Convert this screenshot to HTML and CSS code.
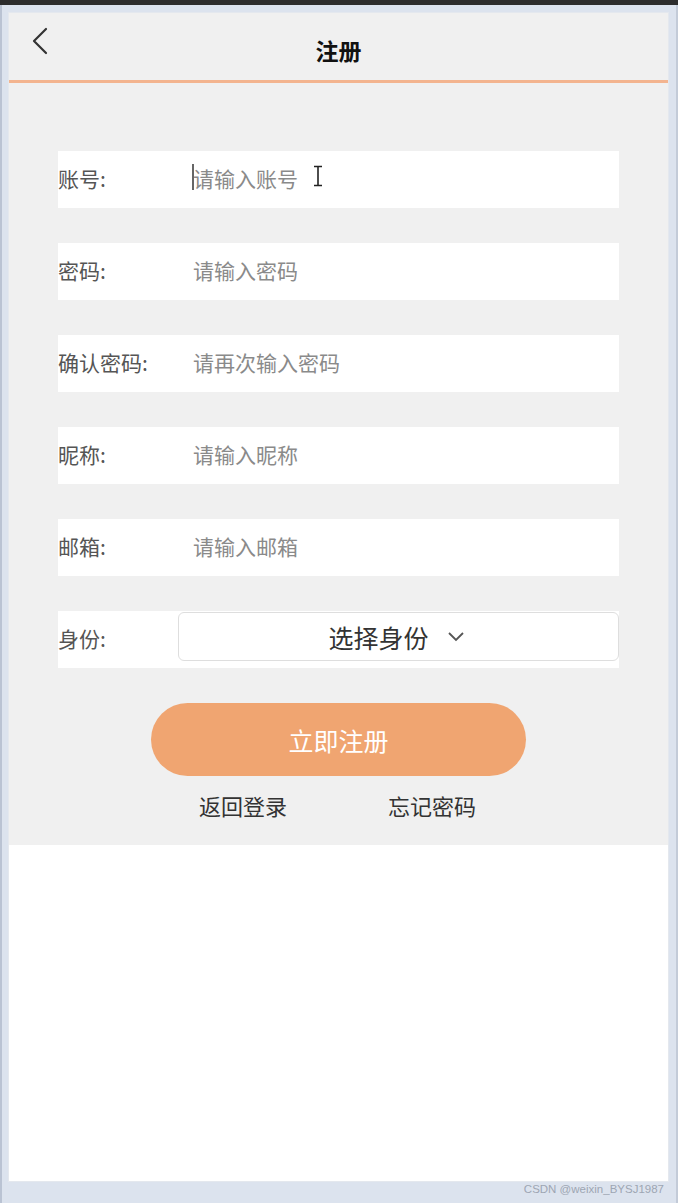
FILE: index.html
```html
<!DOCTYPE html>
<html lang="zh-CN">
<head>
<meta charset="utf-8">
<title>注册</title>
<link rel="stylesheet" href="styles.css">
</head>
<body>
<div class="topbar"></div>
<div class="frame">
  <div class="phone">
    <header class="app-header">
      <span class="back">
        <svg width="18" height="30" viewBox="0 0 18 30"><path d="M15 2 L3 14 L15 26" fill="none" stroke="#333" stroke-width="2.2" stroke-linecap="round" stroke-linejoin="round"/></svg>
      </span>
      <h1 class="title">注册</h1>
    </header>
    <main class="content">
      <div class="form">
        <div class="row">
          <span class="label">账号:</span>
          <span class="input"><span class="caret"></span>请输入账号</span>
          <svg class="ibeam" width="10" height="22" viewBox="0 0 10 22"><path d="M1 1.5 H9 M5 1.5 V20.5 M1 20.5 H9" fill="none" stroke="#222" stroke-width="1.6"/></svg>
        </div>
        <div class="row">
          <span class="label">密码:</span>
          <span class="input">请输入密码</span>
        </div>
        <div class="row">
          <span class="label">确认密码:</span>
          <span class="input">请再次输入密码</span>
        </div>
        <div class="row">
          <span class="label">昵称:</span>
          <span class="input">请输入昵称</span>
        </div>
        <div class="row">
          <span class="label">邮箱:</span>
          <span class="input">请输入邮箱</span>
        </div>
        <div class="row">
          <span class="label">身份:</span>
          <div class="select">
            <span>选择身份</span>
            <svg width="18" height="12" viewBox="0 0 18 12"><path d="M2 2 L9 9 L16 2" fill="none" stroke="#555" stroke-width="1.8"/></svg>
          </div>
        </div>
      </div>
      <button class="submit">立即注册</button>
      <div class="links">
        <span>返回登录</span>
        <span>忘记密码</span>
      </div>
    </main>
  </div>
  <div class="watermark">CSDN @weixin_BYSJ1987</div>
</div>
</body>
</html>
```
FILE: styles.css
```css
* { box-sizing: border-box; }
html, body { margin: 0; padding: 0; }
body {
  width: 678px;
  height: 1203px;
  overflow: hidden;
  background: #dce3ee;
  font-family: "Noto Sans CJK SC", "Microsoft YaHei", sans-serif;
}
.topbar {
  height: 5px;
  background: #2d2d2d;
}
.frame {
  height: 1198px;
  padding: 8px 8px 0 7px;
  border-left: 2px solid #bac3d3;
  border-right: 2px solid #c3cbd8;
  display: flex;
  flex-direction: column;
}
.phone {
  width: 659px;
  height: 1168px;
  background: #ffffff;
  display: flex;
  flex-direction: column;
  box-shadow: 0 0 0 1px #e4e8ee;
}
.app-header {
  height: 70px;
  background: #f0f0f0;
  border-bottom: 3px solid #f3b48f;
  position: relative;
  display: flex;
  align-items: center;
  justify-content: center;
}
.back {
  position: absolute;
  left: 22px;
  top: 14px;
  display: block;
}
.title {
  margin: 6px 0 0;
  font-size: 23px;
  font-weight: 700;
  color: #111;
  line-height: 30px;
}
.content {
  background: #f0f0f0;
  padding: 68px 49px 0;
  height: 762px;
  display: flex;
  flex-direction: column;
  align-items: center;
}
.form {
  width: 561px;
  display: flex;
  flex-direction: column;
  gap: 35px;
}
.row {
  height: 57px;
  background: #ffffff;
  display: flex;
  align-items: center;
  position: relative;
  padding-bottom: 4px;
}
.label {
  width: 120px;
  font-size: 21px;
  color: #555;
  flex: none;
}
.input {
  padding-left: 15px;
  font-size: 21px;
  color: #8a8a8a;
  position: relative;
  display: flex;
  align-items: center;
}
.caret {
  position: absolute;
  left: 14px;
  top: 1px;
  width: 2px;
  height: 26px;
  background: #666;
}
.ibeam {
  position: absolute;
  left: 255px;
  top: 14px;
}
.select {
  width: 441px;
  height: 49px;
  margin-top: 1px;
  align-self: flex-start;
  border: 1px solid #dedede;
  border-radius: 6px;
  background: #fff;
  display: flex;
  align-items: center;
  justify-content: center;
  gap: 18px;
  font-size: 25px;
  color: #333;
  padding-right: 4px;
}
.select span { line-height: 30px; }
.submit {
  margin-top: 35px;
  width: 375px;
  height: 73px;
  border: none;
  border-radius: 37px;
  background: #f0a571;
  color: #ffffff;
  font-family: inherit;
  font-size: 25px;
  padding: 0;
}
.links {
  margin-top: 14px;
  display: flex;
  gap: 101px;
  font-size: 22px;
  color: #333;
  line-height: 30px;
  padding-right: 2px;
}
.watermark {
  align-self: flex-end;
  margin-top: 1px;
  margin-right: 4px;
  font-family: "Liberation Sans", Arial, sans-serif;
  font-size: 11.5px;
  color: #9ea6b3;
  line-height: 14px;
}
```
